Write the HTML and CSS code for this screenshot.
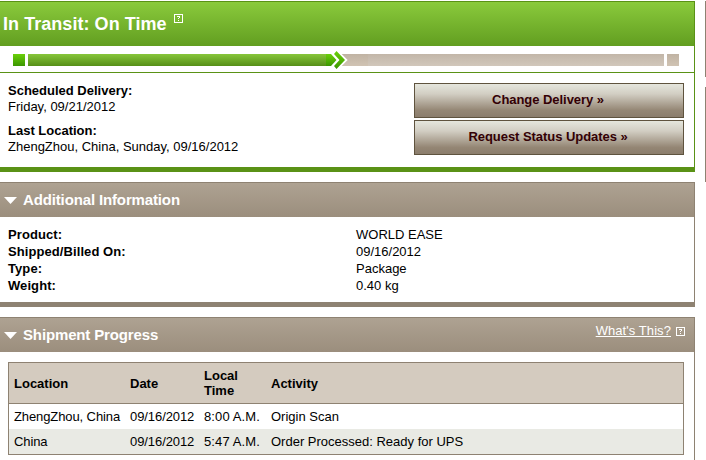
FILE: index.html
```
<!DOCTYPE html>
<html lang="en">
<head>
    <meta charset="UTF-8">
    <meta name="viewport" content="width=device-width, initial-scale=1.0">
    <title>Tracking Detail</title>
    <link rel="stylesheet" href="styles.css">
</head>
<body>
    <div class="page">
        <main>
            <section class="panel status">
                <header class="status-header">
                    <h1>In Transit: On Time</h1>
                    <svg class="help" width="9" height="9" viewBox="0 0 9 9" shape-rendering="crispEdges"><path d="M.5.5h8v8h-8z" fill="none" stroke="#fff"/><path d="M3 2h3v1H3zM5 3h1v1H5zM4 4h1v1H4zM4 6h1v1H4z" fill="#fff"/></svg>
                </header>
                <div class="progress">
                    <div class="step done"></div>
                    <div class="bar filled"></div>
                    <svg class="arrow" width="42" height="20" viewBox="0 0 42 20">
                        <defs>
                            <linearGradient id="green" x1="0" y1="0" x2="0" y2="1"><stop offset="0" stop-color="#6bd00a"/><stop offset="1" stop-color="#3b9600"/></linearGradient>
                            <linearGradient id="tan" x1="0" y1="0" x2="0" y2="1"><stop offset="0" stop-color="#c0b3a3"/><stop offset="1" stop-color="#d0c3b3"/></linearGradient>
                        </defs>
                        <path d="M15.5 4H42v12H15.5l6-6z" fill="url(#tan)"/>
                        <path d="M0 4h5l5.500 6-5.500 6H0z" fill="url(#green)"/>
                        <path d="M10 .5h2L21.500 10 12 19.500h-2L6 16l6-6-6-6z" fill="#fff"/>
                        <path d="M8 4l2.500-3L19 10l-8.500 9L8 16l5.500-6z" fill="url(#green)"/>
                    </svg>
                    <div class="bar empty"></div>
                    <div class="step todo"></div>
                </div>
                <div class="summary">
                    <dl class="facts">
                        <dt>Scheduled Delivery:</dt>
                        <dd>Friday, 09/21/2012</dd>
                        <dt>Last Location:</dt>
                        <dd>ZhengZhou, China, Sunday, 09/16/2012</dd>
                    </dl>
                    <div class="actions">
                        <button>Change Delivery »</button>
                        <button>Request Status Updates »</button>
                    </div>
                </div>
            </section>

            <section class="panel info">
                <header class="panel-header">
                    <svg class="toggle" width="13" height="7" viewBox="0 0 13 7"><path d="M0 0h13L6.500 7z" fill="#fff"/></svg>
                    <h2>Additional Information</h2>
                </header>
                <dl class="details">
                    <dt>Product:</dt><dd>WORLD EASE</dd>
                    <dt>Shipped/Billed On:</dt><dd>09/16/2012</dd>
                    <dt>Type:</dt><dd>Package</dd>
                    <dt>Weight:</dt><dd>0.40 kg</dd>
                </dl>
            </section>

            <section class="panel shipment">
                <header class="panel-header">
                    <svg class="toggle" width="13" height="7" viewBox="0 0 13 7"><path d="M0 0h13L6.500 7z" fill="#fff"/></svg>
                    <h2>Shipment Progress</h2>
                    <div class="whats">
                        <a href="#">What's This?</a>
                        <svg width="9" height="9" viewBox="0 0 9 9" shape-rendering="crispEdges"><path d="M.5.5h8v8h-8z" fill="none" stroke="#fff"/><path d="M3 2h3v1H3zM5 3h1v1H5zM4 4h1v1H4zM4 6h1v1H4z" fill="#fff"/></svg>
                    </div>
                </header>
                <table>
                    <thead>
                        <tr>
                            <th class="c-location">Location</th>
                            <th class="c-date">Date</th>
                            <th class="c-time">Local<br>Time</th>
                            <th>Activity</th>
                        </tr>
                    </thead>
                    <tbody>
                        <tr>
                            <td class="place">ZhengZhou, China</td>
                            <td class="date">09/16/2012</td>
                            <td class="time">8:00 A.M.</td>
                            <td>Origin Scan</td>
                        </tr>
                        <tr class="odd">
                            <td class="place">China</td>
                            <td class="date">09/16/2012</td>
                            <td class="time">5:47 A.M.</td>
                            <td>Order Processed: Ready for UPS</td>
                        </tr>
                    </tbody>
                </table>
            </section>
        </main>
        <aside>
            <div class="side-box first"></div>
            <div class="side-box second"></div>
        </aside>
    </div>
</body>
</html>
```
FILE: styles.css
```
* {
  box-sizing: border-box;
}
body {
  margin: 0;
  background: #fff;
  color: #000;
  font-family: "Liberation Sans", Arial, sans-serif;
  font-size: 13px;
  line-height: 16px;
  overflow: hidden;
}
h1, h2, dl, dd {
  margin: 0;
}
.page {
  display: flex;
  gap: 10px;
  height: 460px;
  padding-top: 1px;
}
main {
  width: 695px;
  flex: none;
  display: flex;
  flex-direction: column;
  gap: 10px;
}
.panel {
  flex: none;
  border-top: 1px solid #8e8272;
  border-right: 1px solid #8e8272;
}

/* status */
.status {
  height: 171px;
  border-color: #5a9216;
  border-bottom: 5px solid #5a9216;
}
.status-header {
  height: 44px;
  padding-left: 3px;
  display: flex;
  align-items: flex-start;
  gap: 7px;
  background: linear-gradient(#8aca3c, #629e20);
}
.status-header h1 {
  color: #fff;
  font-size: 18px;
  line-height: 20px;
  letter-spacing: 0.05px;
  margin-top: 12px;
}
.help {
  margin-top: 12px;
}
.progress {
  height: 27px;
  padding: 8px 15px 0 13px;
  display: flex;
  border-bottom: 1px solid #5a9216;
}
.step {
  width: 12px;
  height: 12px;
}
.done {
  background: linear-gradient(#6bd00a, #3b9600);
  margin-right: 3px;
}
.todo {
  background: linear-gradient(#c0b3a3, #d0c3b3);
  margin-left: 3px;
}
.bar {
  height: 12px;
}
.filled {
  width: 298px;
  background: linear-gradient(#87c63a, #568f18);
}
.arrow {
  margin-top: -4px;
}
.empty {
  flex: 1;
  background: linear-gradient(#c2b6a8, #d1c7bb);
}
.summary {
  display: flex;
  justify-content: space-between;
  padding: 10px 10px 0 8px;
}
dt {
  font-weight: bold;
}
.facts dd {
  margin-bottom: 8px;
}
.actions {
  width: 270px;
  display: flex;
  flex-direction: column;
  gap: 2px;
}
button {
  height: 35px;
  padding: 0 2px 2px 0;
  border: 1px solid #5f533e;
  background: linear-gradient(#e5e6dd, #d2cec3 30%, #948674 80%, #8b7d6c);
  color: #330005;
  font: bold 13px "Liberation Sans", Arial, sans-serif;
  letter-spacing: -0.05px;
}

/* brown panels */
.panel-header {
  height: 34px;
  padding-left: 4px;
  display: flex;
  align-items: center;
  gap: 6px;
  background: linear-gradient(#aea292, #9b8e7d);
}
.panel-header h2 {
  color: #fff;
  font-size: 15px;
  line-height: 18px;
  letter-spacing: -0.14px;
}
.toggle {
  margin-top: 1px;
}
.info {
  height: 125px;
  border-bottom: 5px solid #8e8272;
}
.details {
  display: grid;
  grid-template-columns: 348px 1fr;
  line-height: 17px;
  padding: 9px 8px 0;
}
.details dt {
  letter-spacing: 0.08px;
}
.shipment {
  height: 160px;
}
.whats {
  margin: -9px 9px 0 auto;
  display: flex;
  align-items: center;
  gap: 5px;
}
.whats a {
  color: #fff;
  letter-spacing: 0.07px;
}
.whats svg {
  margin-top: 2px;
}
table {
  width: 676px;
  margin: 10px 0 0 8px;
  border: 1px solid #8e8272;
  border-collapse: separate;
  border-spacing: 0;
  table-layout: fixed;
}
th, td {
  padding: 0 0 0 5px;
  text-align: left;
  line-height: 15px;
  white-space: nowrap;
}
th {
  height: 41px;
  background: #d4cbbf;
  border-bottom: 1px solid #8e8272;
}
td {
  height: 25px;
}
.odd td {
  background: #e9eae4;
}
.place {
  letter-spacing: -0.1px;
}
.date {
  letter-spacing: -0.08px;
}
.time {
  letter-spacing: 0.12px;
}
.c-location {
  width: 116px;
}
.c-date {
  width: 74px;
}
.c-time {
  width: 67px;
}

/* sidebar */
aside {
  width: 1px;
  flex: none;
  display: flex;
  flex-direction: column;
  gap: 10px;
}
.side-box {
  background: #8e8272;
}
.first {
  height: 76px;
}
.second {
  height: 95px;
}
```
